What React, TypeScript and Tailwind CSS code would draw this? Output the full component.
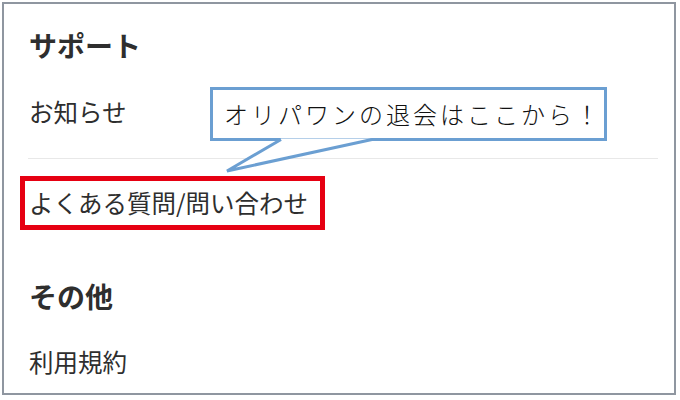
import React from "react";

const jp = { fontFamily: '"Noto Sans CJK JP", "Noto Sans", sans-serif' };

export default function App() {
  return (
    <div className="relative w-[680px] h-[400px] bg-white overflow-hidden" style={jp}>
      {/* framed page */}
      <div className="absolute left-[2px] top-[2px] w-[674px] h-[393px] border-2 border-[#8f96a0] bg-white">
        <div className="pl-[16px] pr-[16px] pt-[21px] text-[#2e2e2e]">
          <div className="h-[40px] pl-[9px] flex items-center text-[28px] font-bold leading-none">
            サポート
          </div>
          <div className="mt-[27px] h-[40px] pl-[9px] flex items-center text-[24.5px] leading-none">
            お知らせ
          </div>
          <div className="mt-[26px] ml-[8px] h-px bg-[#e8e8e8]" />
          <div className="mt-[17px] w-[305px] h-[54px] border-[5px] border-[#e60012] pl-[4px] flex items-center text-[24.5px] leading-none">
            よくある質問/問い合わせ
          </div>
          <div className="mt-[46px] h-[40px] pl-[9px] flex items-center text-[28px] font-bold leading-none">
            その他
          </div>
          <div className="mt-[26px] h-[40px] pl-[9px] flex items-center text-[24.5px] leading-none">
            利用規約
          </div>
        </div>
      </div>

      {/* callout */}
      <div className="absolute left-[210px] top-[87px] w-[397px] h-[54px] border-[3px] border-[#6b9fd2] bg-white flex items-center pl-[11px]">
        <span className="text-[24px] font-light tracking-[3px] text-[#111111] leading-none">
          オリパワンの退会はここから！
        </span>
      </div>
      <svg className="absolute inset-0 pointer-events-none" width="680" height="400">
        <polygon points="281,138.5 227,171 372,138.5" fill="#ffffff" stroke="none" />
        <polyline
          points="281,139.5 227,171 372,139.5"
          fill="none"
          stroke="#6b9fd2"
          strokeWidth="3"
          strokeLinejoin="miter"
        />
      </svg>
    </div>
  );
}
